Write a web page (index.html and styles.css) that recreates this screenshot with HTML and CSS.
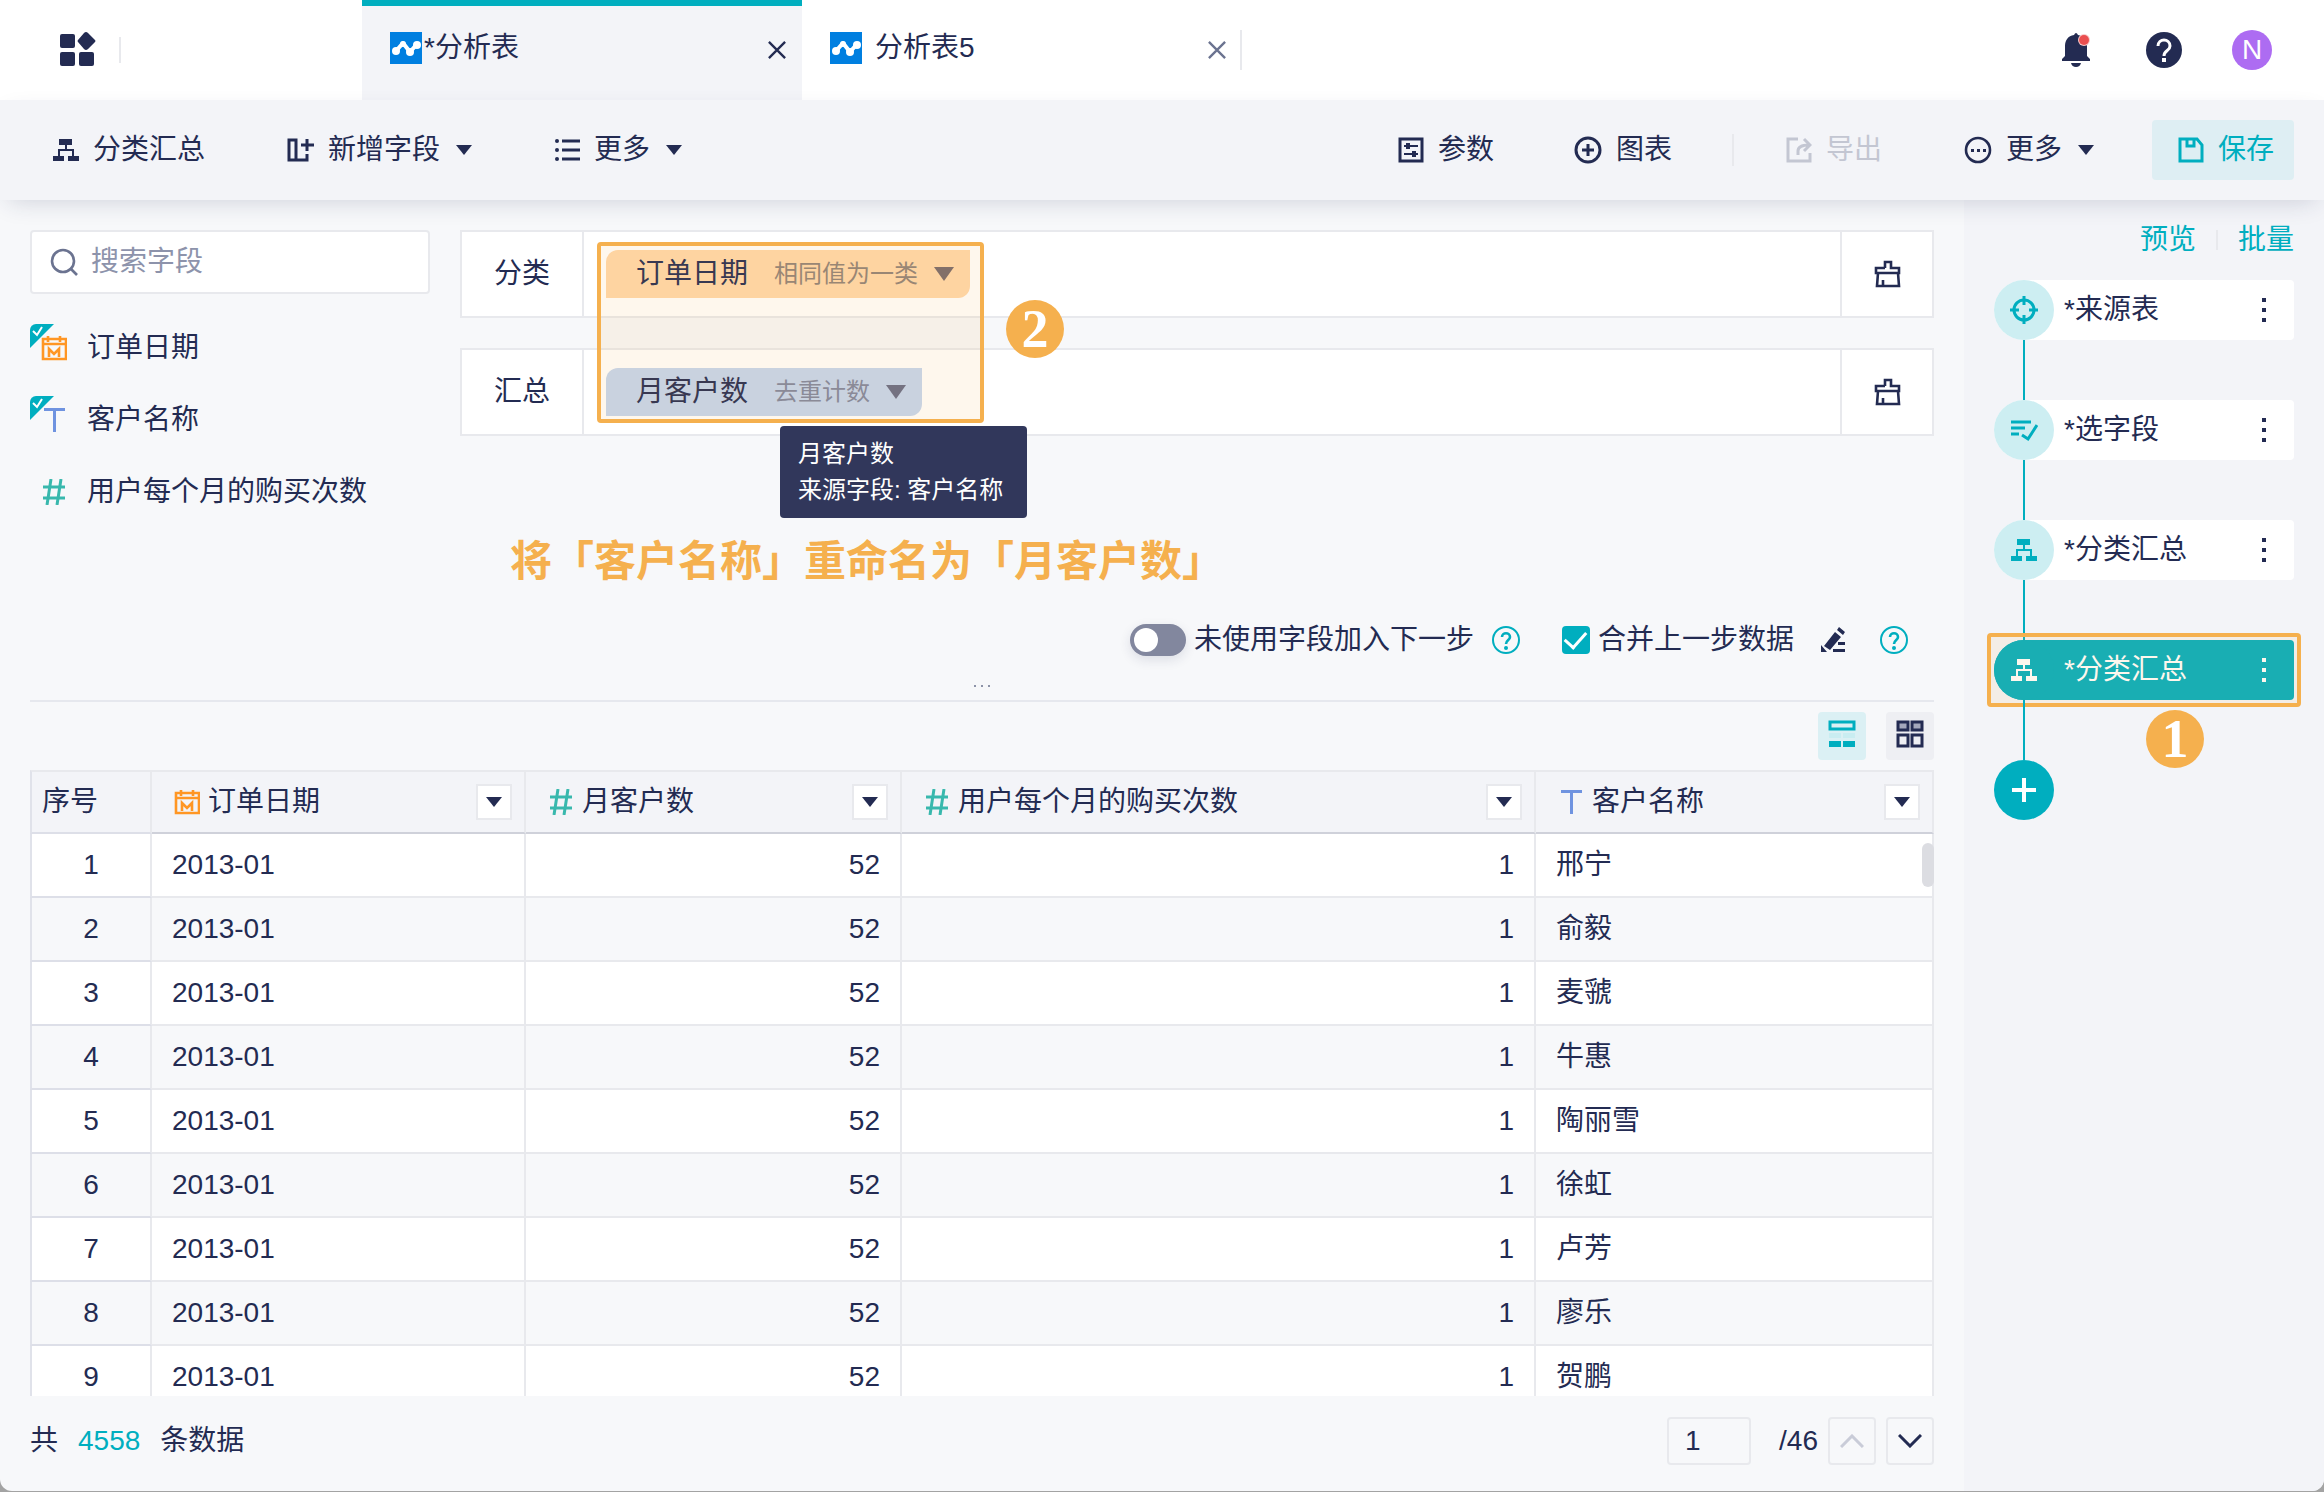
FILE: index.html
```html
<!DOCTYPE html>
<html lang="zh-CN">
<head>
<meta charset="utf-8">
<meta name="viewport" content="width=device-width, initial-scale=1">
<title>分析表</title>
<link rel="stylesheet" href="styles.css">
</head>
<body>
<svg class="defs" aria-hidden="true">
  <symbol id="i-tree" viewBox="0 0 26 24"><path fill="currentColor" d="M6 1h13v6h-5v4h7v7h5v5H15v-5h4v-5H7v5h4v5H0v-5h5v-7h7V7H6z"/></symbol>
  <symbol id="i-calendar" viewBox="0 0 26 26"><path fill="none" stroke="currentColor" stroke-width="2.6" d="M2 4h23v20H2zM2 9h23M7 1v6M19 1v6"/><path fill="none" stroke="currentColor" stroke-width="2.6" d="M8 22v-8l5 5 5-5v8"/></symbol>
  <symbol id="i-text" viewBox="0 0 26 26"><path fill="currentColor" d="M3 1h21v3H15v21h-3V4H3z"/></symbol>
  <symbol id="i-hash" viewBox="0 0 26 26"><path fill="none" stroke="currentColor" stroke-width="3" d="M10 0L6 26M20 0l-4 26M2 8h22M2 19h22"/></symbol>
  <symbol id="i-caret" viewBox="0 0 16 10"><path fill="currentColor" d="M0 0h16L8 10z"/></symbol>
  <symbol id="i-close" viewBox="0 0 20 20"><path fill="none" stroke="currentColor" stroke-width="2.6" d="M1 1l18 18M19 1L1 19"/></symbol>
  <symbol id="i-brush" viewBox="0 0 28 28"><path fill="none" stroke="currentColor" stroke-width="2.6" d="M12 8V2h6v6h8v5H3V8h9M5 13L4 26h22l-1-13M10 26v-6"/></symbol>
  <symbol id="i-help" viewBox="0 0 28 28"><circle cx="14" cy="14" r="13" fill="none" stroke="currentColor" stroke-width="2"/><path fill="none" stroke="currentColor" stroke-width="2.6" d="M10 11c0-5 8-5 8 0 0 3-4 3-4 7"/><circle cx="14" cy="22" r="2" fill="currentColor"/></symbol>
  <symbol id="i-chart" viewBox="0 0 32 32"><path fill="#007fe0" d="M0 0h32v32H0z"/><path fill="none" stroke="#fff" stroke-width="4" stroke-linejoin="round" d="M6 19l7-8 7 9 7-8"/><g fill="#fff"><circle cx="6" cy="19" r="4"/><circle cx="13" cy="12" r="3"/><circle cx="20" cy="20" r="4"/><circle cx="27" cy="13" r="4"/></g></symbol>
  <symbol id="i-dots" viewBox="0 0 4 24"><path fill="currentColor" d="M0 0h4v4H0zM0 10h4v4H0zM0 20h4v4H0z"/></symbol>
  <symbol id="i-used" viewBox="0 0 24 24"><path fill="#00aebf" d="M6 0h18L0 24V6a6 6 0 0 1 6-6z"/><path fill="none" stroke="#fff" stroke-width="2" d="M3 7l4 4 5-8"/></symbol>
</svg>

<div class="app">
  <header class="topbar">
    <div class="home">
      <button class="icon-btn" aria-label="首页"><svg width="36" height="36" viewBox="0 0 36 36"><g fill="currentColor"><rect x="0" y="2" width="15" height="14" rx="2"/><rect x="0" y="20" width="15" height="14" rx="2"/><rect x="19" y="20" width="15" height="14" rx="2"/><path d="M26 0q1 0 2 1l7 7q1 1 0 2l-7 7q-2 2-4 0l-6-7q-1-1 0-2l6-7q1-1 2-1z"/></g></svg></button>
    </div>
    <nav class="tabs">
      <div class="tab tab-active"><svg class="tab-icon"><use href="#i-chart"/></svg><a class="tab-name" href="#t1">*分析表</a><button class="tab-close" aria-label="关闭"><svg width="18" height="18"><use href="#i-close"/></svg></button></div>
      <div class="tab tab-idle"><svg class="tab-icon"><use href="#i-chart"/></svg><a class="tab-name" href="#t2">分析表5</a><button class="tab-close" aria-label="关闭"><svg width="18" height="18"><use href="#i-close"/></svg></button></div>
    </nav>
    <div class="account">
      <button class="icon-btn" aria-label="通知"><svg width="36" height="36" viewBox="0 0 36 36"><path fill="currentColor" d="M14 3q2-4 4 0c6 1 9 5 9 11v10l3 3v2H2v-2l3-3V14C5 8 8 4 14 3zM11 31h10q-1 4-5 4t-5-4z"/><circle cx="24" cy="8" r="6" fill="#f8c9c9"/><circle cx="24" cy="8" r="5" fill="#ea4f50"/></svg></button>
      <button class="icon-btn" aria-label="帮助"><svg width="36" height="36" viewBox="0 0 36 36"><circle cx="18" cy="18" r="18" fill="currentColor"/><path fill="none" stroke="#fff" stroke-width="3" d="M12 14c0-8 12-8 12 0 0 5-6 4-6 10"/><path fill="#fff" d="M16 26h4v4h-4z"/></svg></button>
      <button class="avatar">N</button>
    </div>
  </header>

  <div class="toolbar">
    <button class="tool"><svg width="26" height="24"><use href="#i-tree"/></svg>分类汇总</button>
    <button class="tool"><svg width="27" height="26" viewBox="0 0 27 26"><path fill="none" stroke="currentColor" stroke-width="3" d="M2 3h7v20H2zM9 23h11v-6M20 2v12M14 8h13"/></svg>新增字段<svg class="caret"><use href="#i-caret"/></svg></button>
    <button class="tool"><svg width="26" height="26" viewBox="0 0 26 26"><path fill="none" stroke="currentColor" stroke-width="3" d="M8 4h18M8 13h18M8 22h18"/><g fill="currentColor"><circle cx="3" cy="4" r="2"/><circle cx="3" cy="13" r="2"/><circle cx="3" cy="22" r="2"/></g></svg>更多<svg class="caret"><use href="#i-caret"/></svg></button>
    <div class="tools-right">
      <button class="tool"><svg width="26" height="26" viewBox="0 0 26 26"><path fill="none" stroke="currentColor" stroke-width="3" d="M2 2h22v22H2z"/><path fill="none" stroke="currentColor" stroke-width="2" d="M6 9h14M6 17h14"/><path fill="currentColor" d="M8 6h4v6H8zM14 14h4v6h-4z"/></svg>参数</button>
      <button class="tool"><svg width="28" height="28" viewBox="0 0 28 28"><circle cx="14" cy="14" r="12" fill="none" stroke="currentColor" stroke-width="3"/><path fill="none" stroke="currentColor" stroke-width="3" d="M14 8v12M8 14h12"/></svg>图表</button>
      <span class="rule"></span>
      <button class="tool" disabled><svg width="26" height="26" viewBox="0 0 26 26"><path fill="none" stroke="currentColor" stroke-width="3" d="M12 2H2v22h22v-8M12 18v-4q0-6 11-6M18 2l6 6-6 6"/></svg>导出</button>
      <button class="tool"><svg width="28" height="28" viewBox="0 0 28 28"><circle cx="14" cy="14" r="12" fill="none" stroke="currentColor" stroke-width="2.6"/><path fill="currentColor" d="M7 13h3v3H7zM13 13h3v3h-3zM19 13h3v3h-3z"/></svg>更多<svg class="caret"><use href="#i-caret"/></svg></button>
      <button class="tool save"><svg width="26" height="26" viewBox="0 0 26 26"><path fill="none" stroke="currentColor" stroke-width="3" d="M2 2h17l5 6v16H2z"/><path fill="none" stroke="currentColor" stroke-width="3" d="M9 2v7h7V2"/></svg>保存</button>
    </div>
  </div>

  <div class="body">
    <main class="main">
      <section class="config">
        <aside class="fields">
          <label class="search"><svg width="28" height="28" viewBox="0 0 28 28"><circle cx="13" cy="13" r="11" fill="none" stroke="currentColor" stroke-width="2.6"/><path stroke="currentColor" stroke-width="2.6" d="M21 21l6 6"/></svg><input type="search" placeholder="搜索字段" aria-label="搜索字段"></label>
          <ul class="field-list">
            <li><svg class="used"><use href="#i-used"/></svg><svg class="type date"><use href="#i-calendar"/></svg>订单日期</li>
            <li><svg class="used"><use href="#i-used"/></svg><svg class="type str"><use href="#i-text"/></svg>客户名称</li>
            <li><svg class="type num"><use href="#i-hash"/></svg>用户每个月的购买次数</li>
          </ul>
        </aside>
        <div class="setup">
          <div class="groups">
            <div class="group"><span class="group-name">分类</span><div class="drop"><button class="chip chip-dim">订单日期<small>相同值为一类</small><svg width="20" height="14" viewBox="0 0 20 14"><path fill="currentColor" d="M0 0h20L10 14z"/></svg></button></div><button class="clear" aria-label="清空"><svg width="28" height="28"><use href="#i-brush"/></svg></button></div>
            <div class="group"><span class="group-name">汇总</span><div class="drop"><button class="chip chip-sum">月客户数<small>去重计数</small><svg width="20" height="14" viewBox="0 0 20 14"><path fill="currentColor" d="M0 0h20L10 14z"/></svg></button></div><button class="clear" aria-label="清空"><svg width="28" height="28"><use href="#i-brush"/></svg></button></div>
            <div class="mark mark-groups"></div>
            <span class="step step-two">2</span>
            <div class="tooltip" role="tooltip">月客户数<br>来源字段: 客户名称</div>
          </div>
          <p class="caption">将「客户名称」重命名为「月客户数」</p>
          <div class="options">
            <label class="option"><input type="checkbox" class="switch" role="switch">未使用字段加入下一步</label>
            <button class="icon-btn help" aria-label="说明"><svg width="28" height="28"><use href="#i-help"/></svg></button>
            <label class="option merge"><input type="checkbox" class="check" checked>合并上一步数据</label>
            <button class="icon-btn edit" aria-label="编辑"><svg width="26" height="26" viewBox="0 0 26 26"><path fill="currentColor" d="M15 5l6 5L10 23l-6-4zM17 3l2-3 6 5-2 3zM1 18l6 7H1zM18 15h7v3h-7zM13 22h12v3H13z"/></svg></button>
            <button class="icon-btn help help-last" aria-label="说明"><svg width="28" height="28"><use href="#i-help"/></svg></button>
          </div>
        </div>
      </section>
      <div class="resizer"><svg width="16" height="4" viewBox="0 0 16 4"><path fill="#8d93a8" d="M0 1h2v2H0zM7 1h2v2H7zM14 1h2v2h-2z"/></svg></div>

      <div class="views">
        <button class="view view-on" aria-label="列表"><svg width="28" height="28" viewBox="0 0 28 28"><path fill="none" stroke="currentColor" stroke-width="3" d="M2 2h24v7H2z"/><path fill="#c9edf1" d="M1 13h12v5H1zM15 13h12v5H15z"/><path fill="currentColor" d="M1 21h12v6H1zM15 21h12v6H15z"/></svg></button>
        <button class="view" aria-label="网格"><svg width="28" height="28" viewBox="0 0 28 28"><path fill="#a3a7bb" d="M2 2h10v8H2zM16 2h10v8H16z"/><path fill="none" stroke="currentColor" stroke-width="3" d="M2 2h10v8H2zM16 2h10v8H16zM2 15h10v11H2zM16 15h10v11H16z"/></svg></button>
      </div>

      <div class="table-wrap">
        <table class="data">
          <colgroup><col class="c1"><col class="c2"><col class="c3"><col class="c4"><col></colgroup>
          <thead><tr>
            <th class="seq">序号</th>
            <th><div class="head"><svg class="type date"><use href="#i-calendar"/></svg>订单日期<button class="filter" aria-label="筛选"><svg class="caret"><use href="#i-caret"/></svg></button></div></th>
            <th><div class="head"><svg class="type num"><use href="#i-hash"/></svg>月客户数<button class="filter" aria-label="筛选"><svg class="caret"><use href="#i-caret"/></svg></button></div></th>
            <th><div class="head"><svg class="type num"><use href="#i-hash"/></svg>用户每个月的购买次数<button class="filter" aria-label="筛选"><svg class="caret"><use href="#i-caret"/></svg></button></div></th>
            <th><div class="head"><svg class="type str"><use href="#i-text"/></svg>客户名称<button class="filter" aria-label="筛选"><svg class="caret"><use href="#i-caret"/></svg></button></div></th>
          </tr></thead>
          <tbody>
            <tr><td>1</td><td>2013-01</td><td>52</td><td>1</td><td>邢宁</td></tr>
            <tr><td>2</td><td>2013-01</td><td>52</td><td>1</td><td>俞毅</td></tr>
            <tr><td>3</td><td>2013-01</td><td>52</td><td>1</td><td>麦虢</td></tr>
            <tr><td>4</td><td>2013-01</td><td>52</td><td>1</td><td>牛惠</td></tr>
            <tr><td>5</td><td>2013-01</td><td>52</td><td>1</td><td>陶丽雪</td></tr>
            <tr><td>6</td><td>2013-01</td><td>52</td><td>1</td><td>徐虹</td></tr>
            <tr><td>7</td><td>2013-01</td><td>52</td><td>1</td><td>卢芳</td></tr>
            <tr><td>8</td><td>2013-01</td><td>52</td><td>1</td><td>廖乐</td></tr>
            <tr><td>9</td><td>2013-01</td><td>52</td><td>1</td><td>贺鹏</td></tr>
          </tbody>
        </table>
        <span class="thumb"></span>
      </div>

      <footer class="footer">
        <span>共</span><span class="total">4558</span><span>条数据</span>
        <div class="pager">
          <input class="page" value="1" aria-label="页码"><span class="pages">/46</span>
          <button class="turn" disabled aria-label="上一页"><svg width="24" height="14" viewBox="0 0 24 14"><path fill="none" stroke="currentColor" stroke-width="3" d="M1 13L12 2l11 11"/></svg></button>
          <button class="turn" aria-label="下一页"><svg width="24" height="14" viewBox="0 0 24 14"><path fill="none" stroke="currentColor" stroke-width="3" d="M1 1l11 11L23 1"/></svg></button>
        </div>
      </footer>
    </main>

    <aside class="steps">
      <div class="steps-links"><a href="#preview">预览</a><span class="rule"></span><a href="#batch">批量</a></div>
      <ol class="flow">
        <li class="node"><span class="dot"><svg width="28" height="28" viewBox="0 0 28 28"><circle cx="14" cy="14" r="10" fill="none" stroke="currentColor" stroke-width="3"/><path stroke="currentColor" stroke-width="3" d="M14 0v9M14 19v9M0 14h9M19 14h9"/></svg></span><span class="node-name">*来源表</span><button class="menu" aria-label="菜单"><svg width="4" height="24"><use href="#i-dots"/></svg></button></li>
        <li class="node"><span class="dot"><svg width="28" height="28" viewBox="0 0 28 28"><path fill="none" stroke="currentColor" stroke-width="3" d="M1 6h20M1 12h14M1 18h8M12 19l6 4 9-14"/></svg></span><span class="node-name">*选字段</span><button class="menu" aria-label="菜单"><svg width="4" height="24"><use href="#i-dots"/></svg></button></li>
        <li class="node"><span class="dot"><svg width="26" height="24"><use href="#i-tree"/></svg></span><span class="node-name">*分类汇总</span><button class="menu" aria-label="菜单"><svg width="4" height="24"><use href="#i-dots"/></svg></button></li>
        <li class="node node-on"><span class="dot"><svg width="26" height="24"><use href="#i-tree"/></svg></span><span class="node-name">*分类汇总</span><button class="menu" aria-label="菜单"><svg width="4" height="24"><use href="#i-dots"/></svg></button><div class="mark mark-node"></div><span class="step step-one">1</span></li>
      </ol>
      <button class="add" aria-label="添加步骤"><svg width="24" height="24" viewBox="0 0 24 24"><path stroke="currentColor" stroke-width="4" d="M12 0v24M0 12h24"/></svg></button>
    </aside>
  </div>
</div>
</body>
</html>
```
FILE: styles.css
```css
:root {
  --navy: #232b52;
  --teal: #00aebf;
  --line: #e8e9ed;
  --panel: #f3f4f8;
  --page: #f7f8fa;
  --orange: #f5b04e;
  --muted: #8d93ab;
}

* { box-sizing: border-box; }

body {
  margin: 0;
  background: #a3a3a3;
  color: var(--navy);
  font: 28px/40px "Liberation Sans", "Noto Sans CJK SC", sans-serif;
}

button, input { font: inherit; color: inherit; }
button { margin: 0; padding: 0; border: 0; background: none; cursor: pointer; }
a { color: inherit; text-decoration: none; }
svg { display: block; flex: none; }
ul, ol { margin: 0; padding: 0; list-style: none; }
.defs { position: absolute; width: 0; height: 0; }

.app {
  display: flex;
  flex-direction: column;
  height: calc(100vh - 1px);
  overflow: hidden;
  border-radius: 0 0 12px 12px;
  background: var(--page);
}

.icon-btn { display: flex; }
.caret { width: 16px; height: 10px; }
.rule { width: 2px; height: 32px; background: var(--line); }

/* Top bar */
.topbar { display: flex; height: 100px; background: #fff; }
.home { display: flex; align-items: center; width: 362px; padding-left: 60px; }
.home::after { content: ""; width: 2px; height: 26px; margin-left: 23px; background: var(--line); }
.tabs { display: flex; }
.tab {
  display: flex;
  align-items: center;
  width: 440px;
  padding: 0 16px 4px 28px;
}
.tab-active { background: var(--panel); box-shadow: inset 0 6px var(--teal); }
.tab-idle::after { content: ""; width: 2px; height: 40px; margin: 4px -16px 0 14px; background: var(--line); }
.tab-idle .tab-close { color: #6b7390; }
.tab-icon { width: 32px; height: 32px; }
.tab-name { margin-left: 2px; }
.tab-idle .tab-name { margin-left: 13px; }
.tab-close { margin: 4px 0 0 auto; }
.account { display: flex; align-items: center; gap: 50px; margin-left: auto; padding-right: 52px; }
.avatar { width: 40px; height: 40px; border-radius: 50%; background: #ad6cf2; color: #fff; }

/* Toolbar */
.toolbar {
  position: relative;
  z-index: 1;
  display: flex;
  align-items: center;
  gap: 82px;
  height: 100px;
  padding: 0 30px 0 53px;
  background: var(--panel);
  box-shadow: 0 8px 24px -8px rgba(31, 40, 80, .2);
}
.tool { display: flex; align-items: center; gap: 14px; white-space: nowrap; }
.tool .caret { margin-left: 2px; }
.tool:disabled { color: #c3c6d2; }
.tools-right { display: flex; align-items: center; gap: 58px; margin-left: auto; }
.tools-right .tool:first-child { margin-right: 22px; }
.tools-right .rule { margin: 0 -6px 0 2px; }
.tools-right .tool:disabled { margin-right: 24px; }
.save { height: 60px; padding: 0 20px 0 26px; border-radius: 4px; background: #deeef3; color: var(--teal); }

/* Body */
.body { display: flex; flex: 1; min-height: 0; }
.main { display: flex; flex-direction: column; flex: 1; min-width: 0; padding: 30px 30px 0; }
.config { display: flex; gap: 30px; }
.fields { width: 400px; }
.search {
  display: flex;
  align-items: center;
  gap: 13px;
  height: 64px;
  padding: 0 18px;
  border: 2px solid var(--line);
  border-radius: 4px;
  background: #fff;
  color: #6b7390;
}
.search input { width: 100%; padding: 0; border: 0; outline: 0; background: none; }
.search input::placeholder { color: var(--muted); opacity: 1; }
.field-list { padding-top: 18px; }
.field-list li { position: relative; display: flex; align-items: center; gap: 20px; height: 72px; padding-left: 11px; }
.used { position: absolute; left: 0; top: 12px; width: 24px; height: 24px; }
.type { width: 26px; height: 26px; }
.date { color: #ff9624; }
.str { color: #6f93e0; }
.num { color: #38b8ad; }

.setup { flex: 1; min-width: 0; }
.groups { position: relative; display: grid; gap: 30px; }
.group { display: flex; height: 88px; border: 2px solid var(--line); background: #fff; }
.group-name { width: 122px; border-right: 2px solid var(--line); text-align: center; line-height: 84px; }
.drop { flex: 1; padding: 18px 22px; }
.chip {
  display: flex;
  align-items: center;
  height: 48px;
  padding: 0 16px 0 30px;
  border-radius: 12px 0;
}
.chip small { margin: 0 16px 0 26px; font-size: 24px; }
.chip-dim { background: #ffd8ab; }
.chip-dim small { color: #8f8279; }
.chip-dim svg { color: #76696c; }
.chip-sum { background: #c5d6f0; }
.chip-sum small { color: #7e86a0; }
.chip-sum svg { color: #666b87; }
.clear { display: grid; place-items: center; width: 92px; border-left: 2px solid var(--line); }

/* Guide marks */
.mark { position: absolute; border: 4px solid var(--orange); border-radius: 4px; background: rgba(245, 176, 78, .1); pointer-events: none; }
.mark-groups { left: 137px; top: 12px; width: 387px; height: 181px; }
.mark-node { inset: -7px; }
.step {
  position: absolute;
  width: 58px;
  height: 58px;
  border-radius: 50%;
  background: var(--orange);
  color: #fff;
  font: 700 54px/58px "Liberation Serif", serif;
  text-align: center;
}
.step-two { left: 546px; top: 70px; }
.step-one { left: 152px; top: 70px; }
.tooltip {
  position: absolute;
  left: 320px;
  top: 196px;
  padding: 10px 24px 10px 18px;
  border-radius: 4px;
  background: #31375b;
  color: #fff;
  font-size: 24px;
  line-height: 36px;
  white-space: nowrap;
}
.caption { margin: 96px 0 32px 50px; color: var(--orange); font-size: 42px; font-weight: 700; line-height: 60px; }

.options { display: flex; align-items: center; justify-content: flex-end; height: 32px; padding-right: 26px; }
.option { display: flex; align-items: center; gap: 8px; }
.switch, .check { flex: none; margin: 0; appearance: none; }
.switch { display: flex; width: 56px; height: 32px; padding: 4px; border-radius: 16px; background: #82879e; box-shadow: 0 4px 12px rgba(31, 40, 80, .12); }
.switch::before { content: ""; width: 24px; height: 24px; border-radius: 50%; background: #fff; }
.check { display: grid; place-items: center; width: 28px; height: 28px; border-radius: 4px; background: var(--teal); }
.check::before { content: ""; width: 18px; height: 10px; margin-bottom: 6px; border: solid #fff; border-width: 0 0 3px 3px; rotate: -48deg; }
.help { margin-left: 18px; color: var(--teal); }
.help-last { margin-left: 34px; }
.merge { margin-left: 42px; }
.edit { margin-left: 26px; }

.resizer { display: grid; place-items: end center; height: 46px; padding-bottom: 12px; border-bottom: 2px solid #e6e8ee; }
.views { display: flex; justify-content: flex-end; gap: 20px; padding: 10px 0; }
.view { display: flex; justify-content: center; width: 48px; height: 48px; padding-top: 8px; border-radius: 4px; background: #eeeff3; }
.view-on { background: #dbf0f4; color: var(--teal); }

/* Table */
.table-wrap { position: relative; flex: 1; min-height: 0; overflow: hidden; }
.data { width: 100%; table-layout: fixed; border-collapse: separate; border-spacing: 0; }
.c1 { width: 122px; }
.c2 { width: 374px; }
.c3 { width: 376px; }
.c4 { width: 634px; }
.data th, .data td { height: 64px; padding: 0 20px; border: solid var(--line); border-width: 0 2px 2px 0; text-align: left; font-weight: 400; }
.data th { padding: 0 12px 0 22px; border-top-width: 2px; border-bottom-color: #cfd1da; background: var(--panel); }
.data th:first-child, .data td:first-child { border-left: 2px solid #e0e2ea; border-bottom-color: #dddfe8; }
.data .seq { padding: 0 10px; }
.head { display: flex; align-items: center; gap: 8px; }
.filter { display: grid; place-items: center; width: 36px; height: 36px; margin-left: auto; border: 2px solid var(--line); background: #fff; }
.data td { background: #fff; }
.data tr:nth-child(even) td { background: #f7f8fa; }
.data td:first-child { padding: 0; text-align: center; }
.data td:nth-child(3), .data td:nth-child(4) { text-align: right; }
.thumb { position: absolute; right: 0; top: 73px; width: 12px; height: 44px; border-radius: 6px; background: #dcdde2; }

.footer { display: flex; align-items: center; gap: 20px; height: 95px; padding-bottom: 6px; }
.total { color: var(--teal); }
.pager { display: flex; align-items: center; gap: 10px; margin-left: auto; }
.page { width: 84px; height: 48px; padding: 0 16px; border: 2px solid var(--line); border-radius: 4px; background: none; }
.pages { margin-left: 18px; }
.turn { display: grid; place-items: center; width: 48px; height: 48px; border: 2px solid var(--line); border-radius: 4px; }
.turn:disabled { color: #c9ccd8; }

/* Steps panel */
.steps { width: 360px; padding: 20px 30px; background: var(--panel); }
.steps-links { display: flex; align-items: center; justify-content: flex-end; gap: 20px; color: var(--teal); }
.steps-links .rule { height: 20px; }
.flow { padding-top: 20px; }
.node { position: relative; display: flex; align-items: center; height: 60px; margin-bottom: 60px; border-radius: 30px 4px 4px 30px; background: #fff; }
.node::after { content: ""; position: absolute; left: 29px; top: 60px; width: 2px; height: 60px; background: var(--teal); }
.dot { display: grid; place-items: center; width: 60px; height: 60px; border-radius: 50%; background: #cdeef2; color: var(--teal); }
.node-name { margin-left: 10px; }
.menu { display: flex; margin-left: auto; padding: 0 28px; }
.node-on, .node-on .dot { background: var(--teal); color: #fff; }
.add { display: grid; place-items: center; width: 60px; height: 60px; border-radius: 50%; background: var(--teal); color: #fff; }
```
